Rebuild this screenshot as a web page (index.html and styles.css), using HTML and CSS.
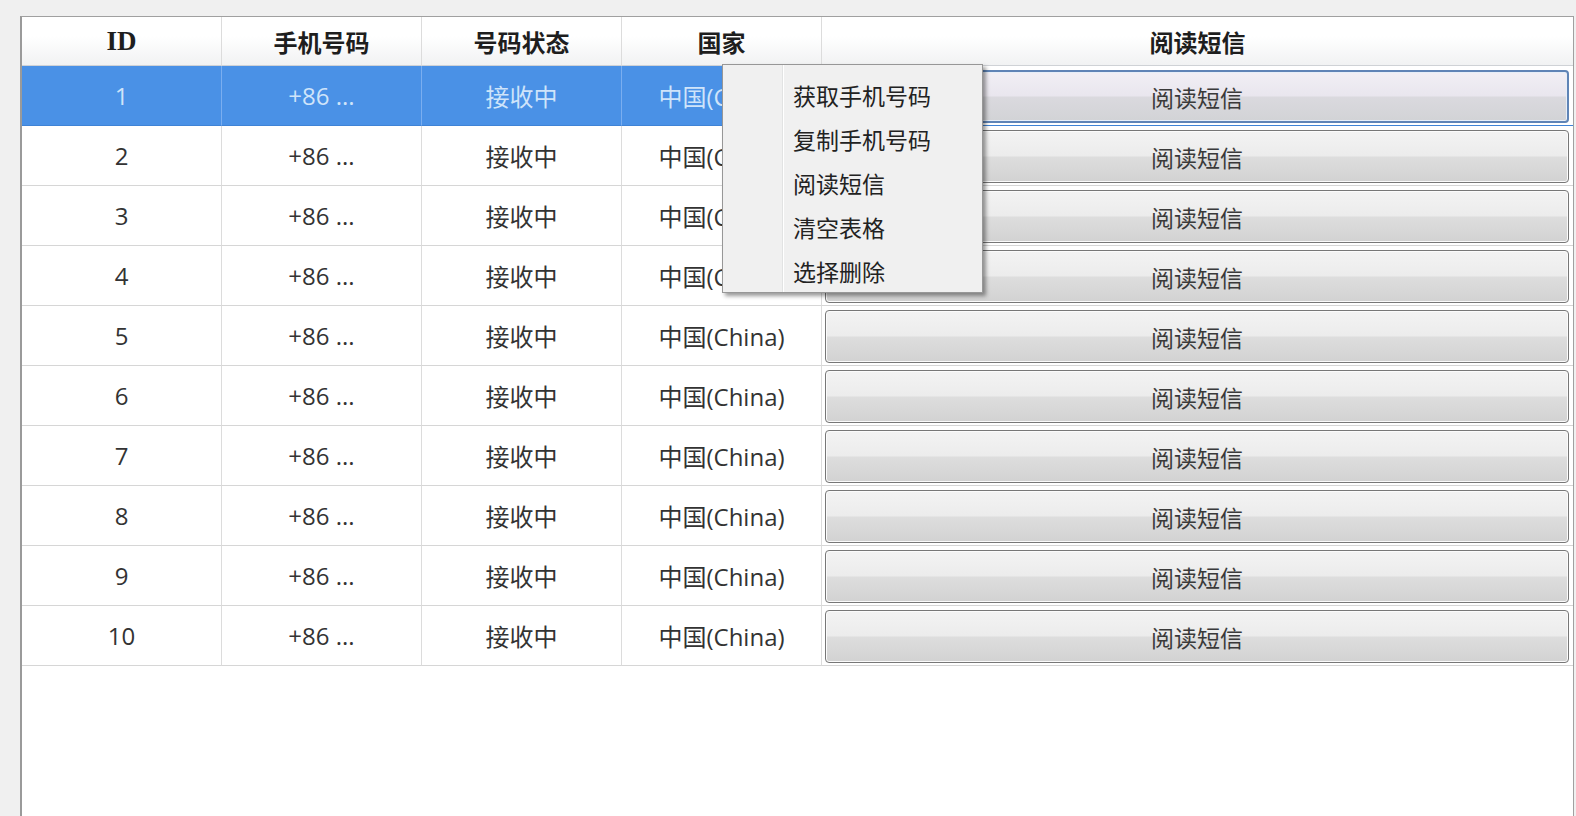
FILE: index.html
```html
<!DOCTYPE html>
<html lang="zh-CN">
<head>
  <meta charset="UTF-8" />
  <title>短信接收</title>
  <link rel="stylesheet" href="styles.css">
</head>
<body>
  <div class="grid-frame">
    <table class="sms-table">
      <colgroup>
        <col class="col-narrow">
        <col class="col-narrow">
        <col class="col-narrow">
        <col class="col-narrow">
        <col>
      </colgroup>
      <thead>
        <tr>
          <th class="id-head">ID</th>
          <th>手机号码</th>
          <th>号码状态</th>
          <th>国家</th>
          <th>阅读短信</th>
        </tr>
      </thead>
      <tbody id="rows"></tbody>
    </table>
  </div>

  <div class="context-menu">
    <div class="menu-gutter"></div>
    <ul class="menu-items">
      <li>获取手机号码</li>
      <li>复制手机号码</li>
      <li>阅读短信</li>
      <li>清空表格</li>
      <li>选择删除</li>
    </ul>
  </div>

  <script>
    // fill the grid with ten receiving numbers, first one selected
    const tbody = document.getElementById('rows');
    for (let i = 1; i <= 10; i++) {
      const tr = document.createElement('tr');
      if (i === 1) tr.className = 'selected';
      tr.innerHTML =
        '<td>' + i + '</td>' +
        '<td>+86 ...</td>' +
        '<td>接收中</td>' +
        '<td>中国(China)</td>' +
        '<td class="btn-cell"><button class="read-btn">阅读短信</button></td>';
      tbody.appendChild(tr);
    }
  </script>
</body>
</html>
```

FILE: styles.css
```css
html, body {
  margin: 0;
  height: 100%;
  overflow: hidden;
}

body {
  background-color: #f0f0f0;
  font-family: "Open Sans", "Noto Sans CJK SC", sans-serif;
  font-size: 24px;
  color: #333;
  position: relative;
}

.grid-frame {
  margin: 16px 0 0 20px;
  width: 1551px;
  height: 820px;
  background: #fff;
  border: 1px solid #a0a0a0;
  border-left: 2px solid #9a9a9a;
}

.sms-table {
  width: 100%;
  table-layout: fixed;
  border-collapse: separate;
  border-spacing: 0;
}

.col-narrow {
  width: 200px;
}

.sms-table th,
.sms-table td {
  padding: 0;
  text-align: center;
  border-right: 1px solid #dcdcdc;
  border-bottom: 1px solid #d6d6d6;
  white-space: nowrap;
  overflow: hidden;
}

.sms-table th:last-child,
.sms-table td:last-child {
  border-right: none;
}

thead tr {
  height: 49px;
}

.sms-table th {
  font-family: "Liberation Serif", "Noto Sans CJK SC", serif;
  font-weight: bold;
  color: #1e1e1e;
  background: linear-gradient(#ffffff, #ffffff 40%, #f1f2f3);
  border-bottom: 1px solid #cfd2d6;
}

.sms-table th.id-head {
  font-size: 27px;
}

tbody tr {
  height: 60px;
}

tbody tr.selected td {
  background-color: #4a91e6;
  color: #cfe4fa;
  border-right-color: #7aaef0;
  border-bottom-color: #3f83d6;
}

tbody tr.selected td.btn-cell {
  background-color: #fff;
}

.btn-cell {
  padding: 4px 4px 2px 3px !important;
}

.read-btn {
  display: block;
  width: 100%;
  height: 53px;
  font-family: "Open Sans", "Noto Sans CJK SC", sans-serif;
  font-size: 23px;
  color: #3a3a3a;
  border: 1px solid #777;
  border-radius: 4px;
  background: linear-gradient(#f3f3f3, #ececec 48%, #dddddd 52%, #d2d2d2);
  box-shadow: inset 0 0 0 1px #fbfbfb;
  cursor: pointer;
}

.selected .read-btn {
  border: 2px solid #5f84b6;
  background: linear-gradient(#f1eff5, #e9e6ee 48%, #dad9de 52%, #d2d3d6);
  box-shadow: inset 0 0 0 1px #e6eef8;
}

/* right click menu floating over the grid */
.context-menu {
  position: absolute;
  left: 722px;
  top: 64px;
  width: 259px;
  height: 227px;
  display: flex;
  background-color: #f0f0f0;
  border: 1px solid #979797;
  box-shadow: 3px 3px 4px rgba(0, 0, 0, 0.4);
}

.menu-gutter {
  width: 59px;
  border-right: 1px solid #e2e3e3;
  box-shadow: 1px 0 0 #fff;
}

.menu-items {
  list-style: none;
  margin: 0;
  padding: 8px 0 0 10px;
}

.menu-items li {
  height: 44px;
  line-height: 44px;
  font-family: "Noto Sans CJK SC", sans-serif;
  font-size: 23px;
  color: #222;
}
```
